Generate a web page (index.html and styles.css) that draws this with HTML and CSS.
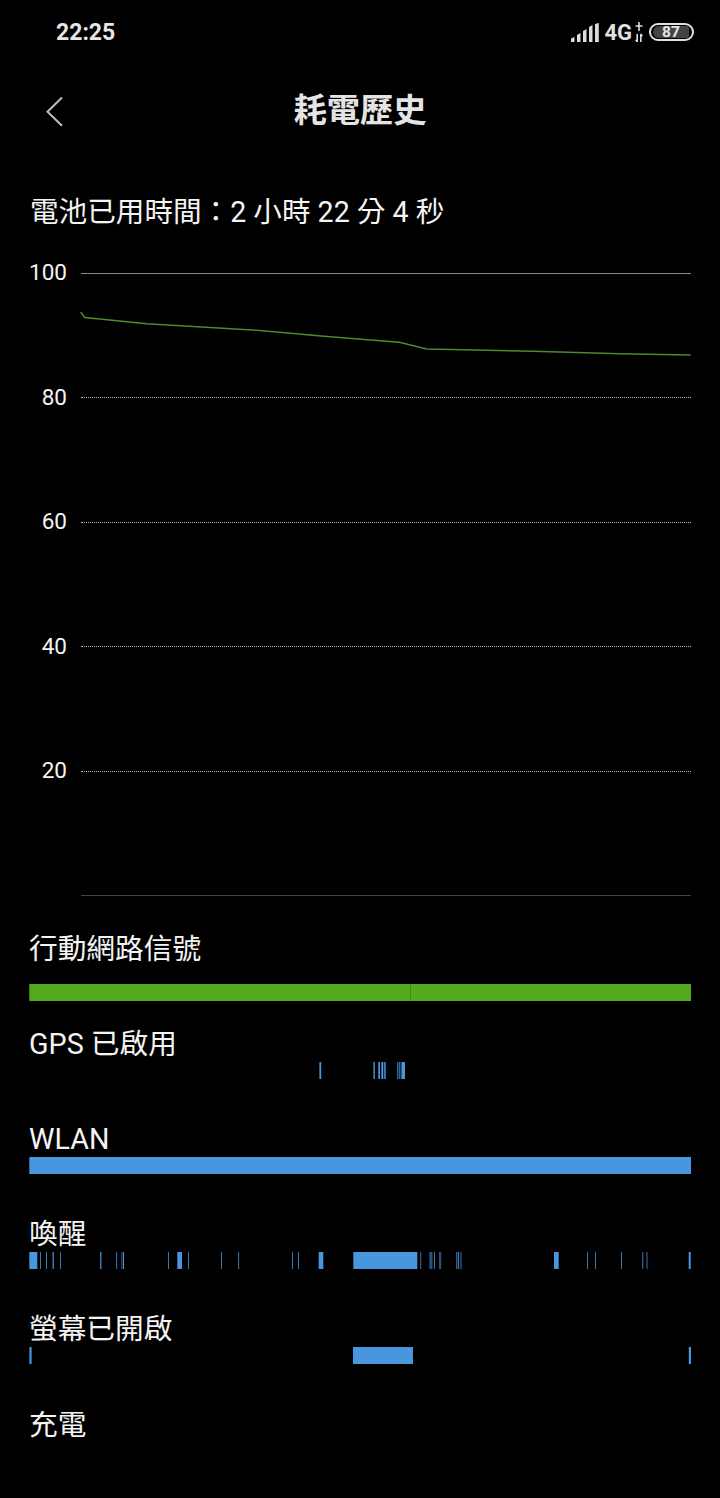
FILE: index.html
```html
<!DOCTYPE html>
<html lang="zh-Hant">
<head>
<meta charset="utf-8">
<title>耗電歷史</title>
<link rel="stylesheet" href="styles.css">
</head>
<body>
<div class="status">
  <span class="time">22:25</span>
  <div class="status-right">
    <svg class="signal" width="28" height="19" viewBox="0 0 28 19"><path d="M0 15.5 3.5 14V19H0zM6 12l3.5-2v9H6zM12 8l3.5-2v13H12zM18 4l3.5-2v17H18zM24 1l3.8-1v19H24z"/></svg>
    <span class="net">4G</span>
    <svg class="arrows" width="8" height="20" viewBox="0 0 8 20"><path d="M4 0v9M.5 4h7M2.2 12v8M5.8 12v8M.8 17.8l1.4 2.2M7.2 14.2 5.8 12"/></svg>
    <span class="battery"><span class="battery-fill">87</span></span>
  </div>
</div>
<header class="head">
  <svg class="back" width="20" height="32" viewBox="0 0 20 32"><path d="M17 1.5 2.5 15.7 17 29.7"/></svg>
  <h1 class="title">耗電歷史</h1>
</header>
<p class="used">電池已用時間：2 小時 22 分 4 秒</p>
<section class="chart">
  <div class="tick"><span class="tick-label">100</span><i class="rule rule-top"></i></div>
  <div class="tick"><span class="tick-label">80</span><i class="rule"></i></div>
  <div class="tick"><span class="tick-label">60</span><i class="rule"></i></div>
  <div class="tick"><span class="tick-label">40</span><i class="rule"></i></div>
  <div class="tick"><span class="tick-label">20</span><i class="rule"></i></div>
  <div class="tick"><span class="tick-label"></span><i class="rule rule-base"></i></div>
  <svg class="curve" width="720" height="120" viewBox="0 261 720 120"><polyline points="80.7,312 84.7,317.5 146.7,323.8 193,326.5 260,330.5 326.7,336.5 399.3,342.3 426.7,349 533,351.2 620,353.8 690.7,355"/></svg>
</section>
<section class="rows">
  <div class="row row-signal">
    <div class="row-label">行動網路信號</div>
    <svg class="track" viewBox="29 0 662 17"><rect class="green" x="29.3" y="0" width="661.7" height="17"/><rect class="seam" x="410" y="0" width="1" height="17"/></svg>
  </div>
  <div class="row">
    <div class="row-label">GPS 已啟用</div>
    <svg class="track" viewBox="29 0 662 17">
      <g class="blue">
        <rect x="319.4" width="1.8" height="17"/><rect x="373.4" width="1.4" height="17"/><rect x="378.3" width="1.7" height="17"/><rect x="381.3" width="2" height="17"/><rect x="384.2" width="1.5" height="17"/><rect x="397.3" width="1" height="17"/><rect x="399.3" width="1" height="17"/><rect x="401.4" width="3.6" height="17"/>
      </g>
    </svg>
  </div>
  <div class="row">
    <div class="row-label">WLAN</div>
    <svg class="track" viewBox="29 0 662 17"><rect class="blue" x="29.3" width="661.7" height="17"/></svg>
  </div>
  <div class="row">
    <div class="row-label">喚醒</div>
    <svg class="track" viewBox="29 0 662 17">
      <g class="blue">
        <rect x="29.3" width="8" height="17"/><rect x="40" width=".8" height="17"/><rect x="46" width=".8" height="17"/><rect x="52.6" width="1.2" height="17"/><rect x="60" width=".8" height="17"/><rect x="100.2" width="1.2" height="17"/><rect x="116.3" width=".8" height="17"/><rect x="121.6" width=".7" height="17"/><rect x="123" width="1" height="17"/><rect x="168" width=".8" height="17"/><rect x="177.3" width="4.7" height="17"/><rect x="188" width=".8" height="17"/><rect x="221" width=".8" height="17"/><rect x="238.3" width=".8" height="17"/><rect x="292" width=".8" height="17"/><rect x="298" width=".8" height="17"/><rect x="318.7" width="4.6" height="17"/><rect x="353.3" width="64" height="17"/><rect x="420" width="1.4" height="17" class="dim"/><rect x="429.3" width="3.2" height="17" class="dim"/><rect x="434" width=".8" height="17"/><rect x="439" width="2.2" height="17" class="dim"/><rect x="456.4" width=".9" height="17"/><rect x="458.2" width=".9" height="17"/><rect x="460.6" width=".8" height="17"/><rect x="554" width="4.7" height="17"/><rect x="587" width=".8" height="17"/><rect x="595" width=".8" height="17"/><rect x="621" width=".8" height="17"/><rect x="642.4" width=".8" height="17"/><rect x="646.3" width="1.4" height="17" class="dim"/><rect x="688.7" width="2" height="17"/>
      </g>
    </svg>
  </div>
  <div class="row">
    <div class="row-label">螢幕已開啟</div>
    <svg class="track" viewBox="29 0 662 17">
      <g class="blue"><rect x="29.4" width="2.2" height="17"/><rect x="353" width="60" height="17"/><rect x="688.8" width="2.2" height="17"/></g>
    </svg>
  </div>
  <div class="row row-last">
    <div class="row-label">充電</div>
  </div>
</section>
</body>
</html>
```
FILE: styles.css
```css
* { box-sizing: border-box; }
html, body { margin: 0; padding: 0; }
body {
  width: 720px;
  height: 1498px;
  overflow: hidden;
  background: #000;
  color: #f4f4f4;
  font-family: Roboto, "Noto Sans CJK TC", sans-serif;
}
.status {
  height: 64px;
  display: flex;
  align-items: center;
  justify-content: space-between;
  padding: 0 26px 0 56px;
}
.time { font-size: 23px; font-weight: 700; color: #e6e6e6; }
.status-right { display: flex; align-items: center; }
.signal { fill: #dcdcdc; }
.net { font-size: 22px; font-weight: 700; color: #e0e0e0; margin-left: 5px; }
.arrows { fill: none; stroke: #ddd; stroke-width: 1.6; margin-left: 3px; }
.battery {
  width: 45px;
  height: 18px;
  margin-left: 6px;
  border: 2px solid #e0e0e0;
  border-radius: 9px;
  padding: 1px;
  display: flex;
}
.battery-fill {
  width: 36px;
  margin-left: 1px;
  background: #444;
  border-radius: 6px 2px 2px 6px;
  color: #e6e6e6;
  font-size: 15.5px;
  font-weight: 700;
  line-height: 12px;
  text-align: center;
}
.head {
  height: 94px;
  display: flex;
  align-items: center;
  justify-content: center;
  position: relative;
}
.back {
  position: absolute;
  left: 45px;
  top: 32px;
  fill: none;
  stroke: #bdbdbd;
  stroke-width: 2;
}
.title {
  margin: 0;
  font-size: 33.2px;
  font-weight: 700;
  color: #e4e4e4;
  line-height: 40px;
}
.used {
  margin: 0;
  height: 103px;
  padding: 36px 0 0 30px;
  font-size: 28.6px;
  line-height: 36px;
  white-space: nowrap;
}
.chart {
  position: relative;
  display: flex;
  flex-direction: column;
  gap: 100.5px;
  padding-right: 29px;
}
.tick { height: 24px; display: flex; align-items: center; }
.tick-label {
  width: 67px;
  margin-right: 14px;
  text-align: right;
  font-size: 22.5px;
  line-height: 24px;
  transform: translateY(-1px);
}
.rule { flex: 1; display: block; border-top: 1px dotted #b8b8b8; }
.rule-top { border-top: 1px solid #8a8a8a; }
.rule-base { border-top: 1px solid #444; }
.curve { position: absolute; left: 0; top: 0; }
.curve polyline { fill: none; stroke: #4e8a2e; stroke-width: 1.4; }
.rows { margin-top: 23px; padding: 0 29px; }
.row { padding-bottom: 42.25px; }
.row-label {
  height: 36px;
  font-size: 28.7px;
  line-height: 36px;
  white-space: nowrap;
}
.track { display: block; width: 662px; height: 17px; }
.row-signal { padding-bottom: 25px; }
.row-signal .track { margin-top: 17px; }
.green { fill: #52ab1c; }
.seam { fill: #5f7a1c; }
.blue { fill: #4796de; }
.dim { opacity: .55; }
```
